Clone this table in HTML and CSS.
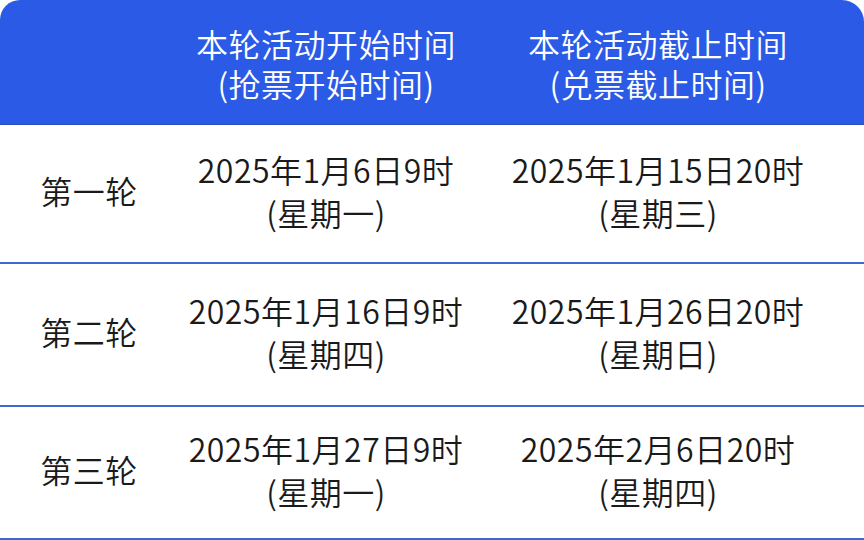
FILE: index.html
```html
<!DOCTYPE html>
<html lang="zh-CN">
<head>
<meta charset="utf-8">
<link rel="stylesheet" href="styles.css">
</head>
<body>
<div class="table">
  <div class="row head">
    <div class="cell c1"></div>
    <div class="cell c2"><span>本轮活动开始时间</span><span>(抢票开始时间)</span></div>
    <div class="cell c3"><span>本轮活动截止时间</span><span>(兑票截止时间)</span></div>
  </div>
  <div class="row r1">
    <div class="cell c1">第一轮</div>
    <div class="cell c2"><span>2025年1月6日9时</span><span>(星期一)</span></div>
    <div class="cell c3"><span>2025年1月15日20时</span><span>(星期三)</span></div>
  </div>
  <div class="row r2">
    <div class="cell c1">第二轮</div>
    <div class="cell c2"><span>2025年1月16日9时</span><span>(星期四)</span></div>
    <div class="cell c3"><span>2025年1月26日20时</span><span>(星期日)</span></div>
  </div>
  <div class="row r3">
    <div class="cell c1">第三轮</div>
    <div class="cell c2"><span>2025年1月27日9时</span><span>(星期一)</span></div>
    <div class="cell c3"><span>2025年2月6日20时</span><span>(星期四)</span></div>
  </div>
</div>
</body>
</html>
```
FILE: styles.css
```css
html, body {
  margin: 0;
  padding: 0;
  background: #ffffff;
}
body {
  width: 864px;
  height: 540px;
  overflow: hidden;
  font-family: "Noto Sans CJK SC", "Noto Sans", sans-serif;
  font-weight: 350;
  color: #1a1a1a;
}
.table {
  display: flex;
  flex-direction: column;
}
.row {
  display: grid;
  grid-template-columns: 178px 296px 1fr;
  border-bottom: 2px solid #4067cf;
}
.head {
  height: 124px;
  background: #2b5be6;
  color: #ffffff;
  border-radius: 20px 22px 0 0;
  border-bottom: 1px solid #2a50c4;
}
.r1 { height: 137px; }
.r2 { height: 141px; }
.r3 { height: 131px; }
.cell {
  display: flex;
  flex-direction: column;
  align-items: center;
  justify-content: center;
  font-size: 32px;
  line-height: 43px;
  letter-spacing: 0.5px;
  white-space: nowrap;
}
.cell span {
  display: block;
}
.head .cell {
  line-height: 40px;
  padding-top: 2px;
}
.c3 {
  padding-right: 22px;
}
.r1 .cell, .r2 .cell, .r3 .cell {
  padding-bottom: 6px;
}
```
